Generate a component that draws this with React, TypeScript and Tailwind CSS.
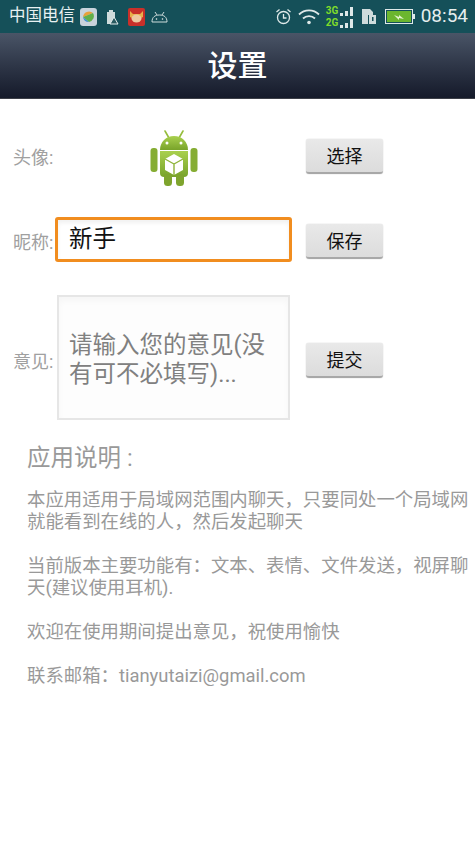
import type { ReactNode } from 'react'

const cjk = "font-['Roboto','Noto_Sans_CJK_SC',sans-serif]"

// full-width punctuation used in the description text
const COMMA = '\uFF0C'
const COLON = '\uFF1A'

function Android() {
  return (
    <svg width="48" height="56" viewBox="0 0 48 56">
      <defs>
        <linearGradient id="bot" x1="0" y1="0" x2="0" y2="1">
          <stop offset="0" stopColor="#a9d04e" />
          <stop offset="1" stopColor="#78a32a" />
        </linearGradient>
      </defs>
      <path d="M15 1l4 7M33 1l-4 7" stroke="#95bd3c" strokeWidth="1.6" strokeLinecap="round" />
      <path d="M10 20c0-8 6-14 14-14s14 6 14 14z" fill="url(#bot)" />
      <circle cx="17" cy="13" r="1.5" fill="#fff" />
      <circle cx="31" cy="13" r="1.5" fill="#fff" />
      <rect x="0.5" y="18" width="7" height="24" rx="3" fill="#86ad33" />
      <rect x="40.5" y="18" width="7" height="24" rx="3" fill="#86ad33" />
      <path d="M10 21h28v22a4 4 0 0 1-4 4H14a4 4 0 0 1-4-4z" fill="url(#bot)" />
      <rect x="14" y="44" width="8" height="12" rx="3.5" fill="#7ea42d" />
      <rect x="26" y="44" width="8" height="12" rx="3.5" fill="#7ea42d" />
      <path d="M24 24l9 5v11l-9 5-9-5V29z" fill="#fff" />
      <path d="M24 34l9-5M24 34l-9-5M24 34v11" stroke="#8fb43a" strokeWidth="1.4" fill="none" />
    </svg>
  )
}

function Btn({ children }: { children: ReactNode }) {
  return (
    <button className="block h-[35px] w-[77px] pt-[3px] rounded-[3px] bg-gradient-to-b from-[#e9e9e9] to-[#dcdcdc] border-b-2 border-b-[#a8a8a8] shadow-[0_0_1px_rgba(0,0,0,0.35)] text-[18px] leading-none text-[#111]">
      {children}
    </button>
  )
}

function Label({ children }: { children: ReactNode }) {
  return <span className="block w-[42px] shrink-0 whitespace-nowrap text-[18px] leading-[24px] text-[#a0a0a0]">{children}</span>
}

function Bars() {
  return (
    <div className="flex items-end gap-[2px] h-[9px]">
      <i className="w-[3px] h-[3px] bg-[#dfe9e9]" />
      <i className="w-[3px] h-[5px] bg-[#dfe9e9]" />
      <i className="w-[3px] h-[9px] bg-[#dfe9e9]" />
    </div>
  )
}

function StatusBar() {
  return (
    <div className="h-[33px] shrink-0 bg-[#155059] flex items-center pl-[9px] pr-[7px] text-white">
      <span className="text-[16.5px] whitespace-nowrap text-[#e8f1f2]">中国电信</span>
      <svg className="ml-[5px]" width="17" height="18" viewBox="0 0 17 18">
        <rect width="17" height="18" rx="3" fill="#c9d3dc" />
        <path d="M3 9a6 6 0 0 1 10-4z" fill="#e8a13a" />
        <path d="M3 9l10-4a6 6 0 0 1-4 9z" fill="#62b04a" />
        <path d="M3 9l6 5a6 6 0 0 1-6-5z" fill="#3e8fd0" />
      </svg>
      <svg className="ml-[8px]" width="14" height="16" viewBox="0 0 14 16">
        <path d="M2 3h2V1h4v2h2v12H2z" fill="#cfdcdc" />
        <path d="M9 8l4 7H5z" fill="#2a5a60" stroke="#e6eeee" strokeWidth="1" />
      </svg>
      <svg className="ml-[9px]" width="17" height="18" viewBox="0 0 17 18">
        <rect width="17" height="18" rx="2" fill="#c9302a" />
        <path d="M2 3l3 3h7l3-3v6l-2 1H4L2 9z" fill="#e8b04a" />
        <ellipse cx="8.500" cy="10.500" rx="5" ry="4" fill="#eec9a0" />
      </svg>
      <svg className="ml-[6px]" width="17" height="12" viewBox="0 0 17 12" fill="none" stroke="#cfdcdc" strokeWidth="1">
        <path d="M1 11c0-5 3-7 7.500-7S16 6 16 11z" />
        <path d="M4 1l2 3M13 1l-2 3" />
        <circle cx="5.500" cy="8" r=".5" />
        <circle cx="11.500" cy="8" r=".5" />
      </svg>
      <div className="flex-1" />
      <svg width="17" height="17" viewBox="0 0 17 17" fill="none" stroke="#dfe9e9" strokeWidth="1.3">
        <circle cx="8.500" cy="9.500" r="6" />
        <path d="M8.500 6v4h3M1.500 4l3-2.500M15.500 4l-3-2.500" />
      </svg>
      <svg className="ml-[5px]" width="24" height="17" viewBox="0 0 24 17" fill="none" stroke="#dfe9e9" strokeWidth="1.8">
        <path d="M2 6.500c5.500-5.500 14.500-5.500 20 0M6 10.500c3.300-3.300 8.700-3.300 12 0" />
        <circle cx="12" cy="14.500" r="1.800" fill="#dfe9e9" stroke="none" />
      </svg>
      <div className="ml-[5px] w-[27px] flex flex-col gap-[2px]">
        <div className="flex items-end justify-between">
          <span className="text-[10px] font-bold leading-[10px] text-[#7fdc2a]">3G</span>
          <Bars />
        </div>
        <div className="flex items-end justify-between">
          <span className="text-[10px] font-bold leading-[10px] text-[#7fdc2a]">2G</span>
          <Bars />
        </div>
      </div>
      <svg className="ml-[8px]" width="16" height="17" viewBox="0 0 16 17">
        <path d="M1 1h8l3 3v3H7v9H1z" fill="#cfdcdc" />
        <rect x="8" y="7" width="7" height="9" fill="#cfdcdc" />
        <rect x="11" y="9" width="1.500" height="4" fill="#155059" />
      </svg>
      <div className="ml-[8px] w-[28px] h-[15px] border border-[#dfe9e9] p-[1px] flex items-center justify-center">
        <div className="w-full h-full bg-[#6bb62f] flex items-center justify-center">
          <svg width="12" height="8" viewBox="0 0 12 8"><path d="M1 2l5 2V2l5 4-5-1v2z" fill="#e5f4d0" /></svg>
        </div>
      </div>
      <div className="w-[2px] h-[5px] bg-[#dfe9e9]" />
      <span className="ml-[6px] text-[19px] text-[#e6eeee]">08:54</span>
    </div>
  )
}

export default function App() {
  return (
    <div className={`w-[475px] h-[845px] overflow-hidden bg-white flex flex-col ${cjk}`}>
      <StatusBar />
      <div className="h-[66px] shrink-0 bg-gradient-to-b from-[#4a5567] to-[#151a2a] border-b border-b-[#3c3f47] flex items-center justify-center">
        <h1 className="text-[30px] font-medium text-white">设置</h1>
      </div>

      <div className="flex items-start mt-[31px] pl-[13px] h-[56px]">
        <div className="mt-[16px]"><Label>头像:</Label></div>
        <div className="ml-[95px]"><Android /></div>
        <div className="ml-[108px] mt-[9px]"><Btn>选择</Btn></div>
      </div>

      <div className="flex items-start mt-[31px] pl-[13px]">
        <div className="mt-[14px]"><Label>昵称:</Label></div>
        <div className="w-[237px] h-[45px] rounded-[3px] border-[3px] border-[#f18d1f] bg-white shadow-[inset_0_3px_4px_rgba(0,0,0,0.06)] pl-[11px] flex items-center text-[23.5px] text-[#111] leading-none">
          新手
        </div>
        <div className="ml-[14px] mt-[7px]"><Btn>保存</Btn></div>
      </div>

      <div className="flex items-start mt-[33px] pl-[13px]">
        <div className="mt-[55px]"><Label>意见:</Label></div>
        <div className="ml-[2px] w-[233px] h-[125px] border-2 border-[#e6e6e6] bg-[#fdfdfd] shadow-[inset_0_4px_6px_rgba(0,0,0,0.03)] pl-[10px] pr-[14px] pt-[4px] flex items-center text-[23.5px] leading-[29px] text-[#808080]">
          <p>请输入您的意见(没有可不必填写)...</p>
        </div>
        <div className="ml-[16px] mt-[48px]"><Btn>提交</Btn></div>
      </div>

      <div className="pl-[27px] pr-[4px] mt-[23px] text-[#999999] text-[18.4px] leading-[22px]">
        <h2 className="text-[23.5px] leading-[30px] mb-[16px]">应用说明<span className="ml-[6px]">:</span></h2>
        <p>{`本应用适用于局域网范围内聊天${COMMA}只要同处一个局域网就能看到在线的人${COMMA}然后发起聊天`}</p>
        <p className="mt-[22px]">{`当前版本主要功能有${COLON}文本、表情、文件发送${COMMA}视屏聊天(建议使用耳机).`}</p>
        <p className="mt-[22px]">{`欢迎在使用期间提出意见${COMMA}祝使用愉快`}</p>
        <p className="mt-[22px]">{`联系邮箱${COLON}`}tianyutaizi@gmail.com</p>
      </div>
    </div>
  )
}
